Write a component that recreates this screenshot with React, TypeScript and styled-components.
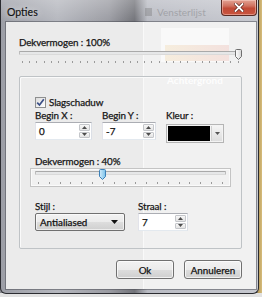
import React from "react";
import styled, { createGlobalStyle } from "styled-components";

const Global = createGlobalStyle`
  html, body { margin: 0; padding: 0; }
  body { font-family: Lato, "Liberation Sans", sans-serif; color: #1a1a1a; }
  #root { width: 262px; height: 297px; }
`;

const Desktop = styled.div`
  width: 262px;
  height: 297px;
  overflow: hidden;
  background:
    linear-gradient(180deg, transparent 0 293px, #e2e2e2 293px),
    linear-gradient(90deg, #8b8c92 0, #8b8c92 257px, #b79a58 258px, #d6bc7c 262px);
`;

const Window = styled.div`
  width: 259px;
  height: 294px;
  box-sizing: border-box;
  display: flex;
  flex-direction: column;
  border: 1px solid #2b2c31;
  border-top: none;
  border-radius: 0 0 6px 6px;
  padding: 0 2px 4px 5px;
  background:
    linear-gradient(180deg, rgba(255, 255, 255, 0.25) 0, rgba(255, 255, 255, 0) 22px),
    linear-gradient(90deg, #9c9ea6 0%, #b5b7be 22%, #9a9ba2 42%, #727379 52%, #b9bbc3 57%, #c6c8cf 100%);
`;

const TitleBar = styled.div`
  position: relative;
  height: 22px;
  display: flex;
  align-items: flex-start;
  justify-content: space-between;
`;

const Title = styled.span`
  margin: 6px 0 0 1px;
  font-size: 10.5px;
  line-height: 13px;
  color: #111;
  -webkit-text-stroke: 0.15px #111;
  text-shadow: 0 0 6px rgba(255, 255, 255, 0.9);
`;

const GhostTitle = styled.div`
  position: absolute;
  left: 139px;
  top: 6px;
  display: flex;
  align-items: center;
  gap: 5px;
  opacity: 0.3;
  font-size: 10px;
  color: #555;
`;

const GhostIcon = styled.span`
  width: 7px;
  height: 8px;
  background: #666;
  display: inline-block;
`;

const CloseButton = styled.div`
  width: 36px;
  height: 16px;
  margin-right: -1px;
  box-sizing: border-box;
  border: 1px solid #5a2a22;
  border-top: none;
  border-radius: 0 0 4px 4px;
  background: linear-gradient(180deg, #e3a394 0%, #d0715f 40%, #c14a36 55%, #c9553f 100%);
  display: flex;
  align-items: center;
  justify-content: center;
  box-shadow: inset 0 0 0 1px rgba(255, 220, 210, 0.45);
`;

const Client = styled.div`
  position: relative;
  flex: 1;
  display: flex;
  flex-direction: column;
  padding: 0 14px 0 13px;
  background: #ebebeb;
  box-shadow: 0 0 0 1px rgba(70, 72, 80, 0.5);
`;

const Ghost = styled.div`
  position: absolute;
  inset: 0;
  pointer-events: none;
  overflow: hidden;
`;

const GhostPane = styled.div`
  position: absolute;
  left: 137px;
  top: 0;
  right: 0;
  bottom: 0;
  background: rgba(255, 255, 255, 0.3);
  border-left: 1px solid rgba(255, 255, 255, 0.6);
`;

const GhostCard = styled.div`
  position: absolute;
  left: 155px;
  top: 6px;
  width: 68px;
  height: 34px;
  background: rgba(255, 255, 255, 0.6);
`;

const GhostStripe = styled.div`
  position: absolute;
  left: 159px;
  top: 23px;
  width: 64px;
  height: 16px;
  background: linear-gradient(90deg, rgba(240, 215, 170, 0.35), rgba(230, 170, 160, 0.3));
`;

const GhostText = styled.div`
  position: absolute;
  left: 161px;
  top: 52px;
  font-size: 10px;
  font-weight: 700;
  color: rgba(255, 255, 255, 0.9);
`;

const Content = styled.div`
  position: relative;
  display: flex;
  flex-direction: column;
`;

const Label = styled.div<{ $mt?: number }>`
  margin-top: ${(p) => p.$mt ?? 0}px;
  font-size: 9.8px;
  line-height: 13px;
  height: 13px;
  white-space: nowrap;
  color: #161616;
  letter-spacing: -0.1px;
  -webkit-text-stroke: 0.25px #161616;
`;

const SliderWrap = styled.div<{ $w: number; $boxed?: boolean; $ml?: number; $mt?: number }>`
  position: relative;
  width: ${(p) => p.$w}px;
  height: ${(p) => (p.$boxed ? 19 : 18)}px;
  margin-left: ${(p) => p.$ml ?? 0}px;
  margin-top: ${(p) => p.$mt ?? 0}px;
  box-sizing: border-box;
  padding: ${(p) => (p.$boxed ? "2px 4px 0" : "2px 0 0")};
  ${(p) =>
    p.$boxed
      ? `border: 1px solid #c4c4c4; background: #f1f1f1; box-shadow: inset 0 0 0 1px #fafafa;`
      : ""}
`;

const Track = styled.div`
  height: 4px;
  box-sizing: border-box;
  border: 1px solid #bcbcbc;
  border-top-color: #a9a9a9;
  border-bottom-color: #dadada;
  background: #e6e7e8;
  border-radius: 1px;
`;

const Ticks = styled.div<{ $mt: number }>`
  display: flex;
  justify-content: space-between;
  margin-top: ${(p) => p.$mt}px;
  padding: 0 3px;
`;

const Tick = styled.span`
  width: 1px;
  height: 2px;
  background: #9a9a9a;
`;

const ThumbHolder = styled.div`
  position: absolute;
  top: 0;
  line-height: 0;
`;

const GroupBox = styled.div`
  margin-top: 9px;
  height: 173px;
  box-sizing: border-box;
  border: 1px solid #bfc3c6;
  box-shadow: inset 1px 1px 0 #fafafa;
  border-radius: 2px;
  padding: 19px 0 0 15px;
  display: flex;
  flex-direction: column;
`;

const CheckRow = styled.div`
  display: flex;
  align-items: center;
  gap: 3px;
  height: 12px;
`;

const CheckBox = styled.div`
  width: 11px;
  height: 11px;
  box-sizing: border-box;
  border: 1px solid #8e8f8f;
  background: linear-gradient(135deg, #dcdcdc, #ffffff);
  display: flex;
  align-items: center;
  justify-content: center;
`;

const FieldGrid = styled.div<{ $cols: string; $gap: number; $mt?: number }>`
  display: grid;
  grid-template-columns: ${(p) => p.$cols};
  column-gap: ${(p) => p.$gap}px;
  margin-top: ${(p) => p.$mt ?? 0}px;
  align-items: start;
`;

const Field = styled.div`
  display: flex;
  flex-direction: column;
`;

const SpinBox = styled.div`
  height: 18px;
  box-sizing: border-box;
  display: flex;
  background: #fff;
  border: 1px solid;
  border-color: #abadb3 #dbdfe6 #e3e9ef #e2e3ea;
`;

const SpinText = styled.span`
  flex: 1;
  padding-left: 3px;
  font-size: 9.8px;
  line-height: 16px;
  color: #111;
  -webkit-text-stroke: 0.25px #111;
`;

const SpinButtons = styled.div`
  width: 11px;
  display: flex;
  flex-direction: column;
  gap: 1px;
  padding: 1px 1px 1px 0;
`;

const SpinBtn = styled.div`
  flex: 1;
  box-sizing: border-box;
  border: 1px solid #c4c6ca;
  border-radius: 1px;
  background: linear-gradient(180deg, #f7f7f7, #e4e4e4);
  display: flex;
  align-items: center;
  justify-content: center;
  line-height: 0;
`;

const ColorBox = styled.div`
  margin-top: 2px;
  height: 19px;
  box-sizing: border-box;
  display: flex;
  border: 1px solid #b5b5b5;
  background: #f3f3f3;
  padding: 1px;
  gap: 1px;
`;

const Swatch = styled.div`
  flex: 1;
  background: #000;
`;

const DropBtn = styled.div`
  width: 10px;
  border-left: 1px solid #d0d0d0;
  background: linear-gradient(180deg, #f4f4f4, #dedede);
  display: flex;
  align-items: center;
  justify-content: center;
  line-height: 0;
`;

const Combo = styled.div`
  height: 18px;
  box-sizing: border-box;
  border: 1px solid #707070;
  border-radius: 2px;
  background: linear-gradient(180deg, #f2f2f2 0%, #ebebeb 50%, #dddddd 51%, #cfcfcf 100%);
  box-shadow: inset 0 0 0 1px rgba(255, 255, 255, 0.6);
  display: flex;
  align-items: center;
  justify-content: space-between;
  padding: 0 6px 0 4px;
  font-size: 9.8px;
  color: #111;
  -webkit-text-stroke: 0.25px #111;
`;

const ButtonRow = styled.div`
  margin-top: 11px;
  display: flex;
  justify-content: flex-end;
  gap: 10px;
`;

const Button = styled.div`
  width: 58px;
  height: 19px;
  box-sizing: border-box;
  border: 1px solid #707070;
  border-radius: 3px;
  background: linear-gradient(180deg, #f2f2f2 0%, #ebebeb 50%, #dddddd 51%, #cfcfcf 100%);
  box-shadow: inset 0 0 0 1px rgba(255, 255, 255, 0.7);
  display: flex;
  align-items: center;
  justify-content: center;
  font-size: 9.8px;
  color: #111;
  -webkit-text-stroke: 0.25px #111;
`;

const UpArrow = () => (
  <svg width="5" height="3" viewBox="0 0 5 3">
    <path d="M0 3 L2.5 0 L5 3 Z" fill="#4d4d4d" />
  </svg>
);
const DownArrow = ({ w = 5, h = 3, c = "#4d4d4d" }: { w?: number; h?: number; c?: string }) => (
  <svg width={w} height={h} viewBox={`0 0 ${w} ${h}`}>
    <path d={`M0 0 L${w / 2} ${h} L${w} 0 Z`} fill={c} />
  </svg>
);

const Thumb = ({ blue }: { blue?: boolean }) => (
  <svg width="7" height="11" viewBox="0 0 7 11">
    <defs>
      <linearGradient id={blue ? "tb" : "tg"} x1="0" y1="0" x2="1" y2="0">
        <stop offset="0" stopColor={blue ? "#d3ecfb" : "#ffffff"} />
        <stop offset="1" stopColor={blue ? "#79c1ea" : "#d6d6d6"} />
      </linearGradient>
    </defs>
    <path
      d="M0.5 1.5 Q0.5 0.5 1.5 0.5 H5.5 Q6.5 0.5 6.5 1.5 V7.5 L3.5 10.5 L0.5 7.5 Z"
      fill={`url(#${blue ? "tb" : "tg"})`}
      stroke={blue ? "#3c80b8" : "#6f6f6f"}
    />
  </svg>
);

const Slider = ({
  w,
  value,
  ticks,
  boxed,
  ml,
  mt,
}: {
  w: number;
  value: number;
  ticks: number;
  boxed?: boolean;
  ml?: number;
  mt?: number;
}) => {
  const inner = boxed ? w - 10 : w;
  const offset = boxed ? 4 : 0;
  const left = offset + Math.round((inner - 7) * value);
  return (
    <SliderWrap $w={w} $boxed={boxed} $ml={ml} $mt={mt}>
      <Track />
      <Ticks $mt={boxed ? 7 : 6}>
        {Array.from({ length: ticks }).map((_, i) => (
          <Tick key={i} />
        ))}
      </Ticks>
      <ThumbHolder style={{ left }}>
        <Thumb blue={boxed} />
      </ThumbHolder>
    </SliderWrap>
  );
};

const Spin = ({ value }: { value: string }) => (
  <SpinBox>
    <SpinText>{value}</SpinText>
    <SpinButtons>
      <SpinBtn>
        <UpArrow />
      </SpinBtn>
      <SpinBtn>
        <DownArrow />
      </SpinBtn>
    </SpinButtons>
  </SpinBox>
);

export default function App() {
  return (
    <Desktop>
      <Global />
      <Window>
        <TitleBar>
          <Title>Opties</Title>
          <GhostTitle>
            <GhostIcon />
            <span>Vensterlijst</span>
          </GhostTitle>
          <CloseButton>
            <svg width="10" height="9" viewBox="0 0 10 9">
              <path d="M1.5 1 L8.5 8 M8.5 1 L1.5 8" stroke="#5a1f17" strokeWidth="3.2" strokeLinecap="square" />
              <path d="M1.5 1 L8.5 8 M8.5 1 L1.5 8" stroke="#ffffff" strokeWidth="1.8" strokeLinecap="square" />
            </svg>
          </CloseButton>
        </TitleBar>
        <Client>
          <Ghost>
            <GhostPane />
            <GhostCard />
            <GhostStripe />
            <GhostText>Achtergrond</GhostText>
          </Ghost>
          <Content>
            <Label $mt={14}>Dekvermogen : 100%</Label>
            <Slider w={223} value={1} ticks={31} mt={0} />
            <GroupBox>
              <CheckRow>
                <CheckBox>
                  <svg width="9" height="9" viewBox="0 0 9 9">
                    <path d="M1.2 4.6 L3.5 7 L7.8 1.3" fill="none" stroke="#3b4f86" strokeWidth="1.7" />
                  </svg>
                </CheckBox>
                <Label>Slagschaduw</Label>
              </CheckRow>
              <FieldGrid $cols="57px 54px 58px" $gap={10} $mt={1}>
                <Field>
                  <Label>Begin X :</Label>
                  <Spin value="0" />
                </Field>
                <Field>
                  <Label>Begin Y :</Label>
                  <Spin value="-7" />
                </Field>
                <Field>
                  <Label>Kleur :</Label>
                  <ColorBox>
                    <Swatch />
                    <DropBtn>
                      <DownArrow w={5} h={3} c="#555" />
                    </DropBtn>
                  </ColorBox>
                </Field>
              </FieldGrid>
              <Label $mt={12}>Dekvermogen : 40%</Label>
              <Slider w={201} value={0.35} ticks={18} boxed ml={-5} mt={0} />
              <FieldGrid $cols="90px 50px" $gap={13} $mt={13}>
                <Field>
                  <Label>Stijl :</Label>
                  <Combo>
                    <span>Antialiased</span>
                    <DownArrow w={7} h={4} c="#111" />
                  </Combo>
                </Field>
                <Field>
                  <Label>Straal :</Label>
                  <Spin value="7" />
                </Field>
              </FieldGrid>
            </GroupBox>
            <ButtonRow>
              <Button>Ok</Button>
              <Button>Annuleren</Button>
            </ButtonRow>
          </Content>
        </Client>
      </Window>
    </Desktop>
  );
}
